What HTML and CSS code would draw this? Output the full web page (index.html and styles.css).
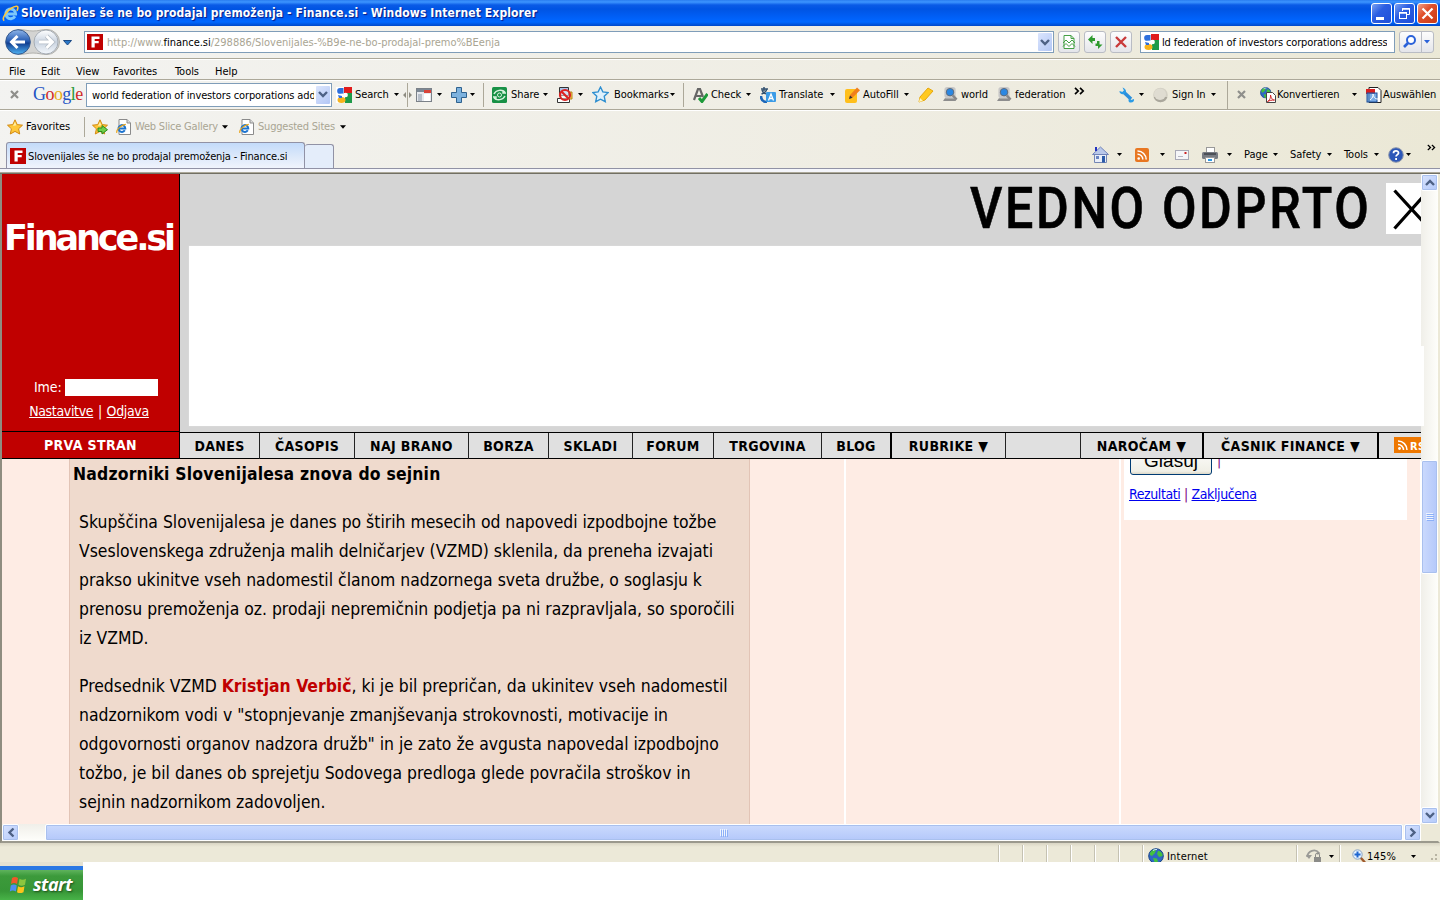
FILE: index.html
```
<!DOCTYPE html>
<html lang="sl">

<head>
  <meta charset="UTF-8">
  <title>Slovenijales še ne bo prodajal premoženja - Finance.si</title>
  <link rel="stylesheet" href="styles.css">
</head>

<body>
  <svg class="defs" width="0" height="0">
    <defs>
      <linearGradient id="blueball" x1="0" y1="0" x2="0" y2="1">
        <stop offset="0" stop-color="#8fb6ea"/>
        <stop offset="0.45" stop-color="#2a5fb4"/>
        <stop offset="0.55" stop-color="#123f92"/>
        <stop offset="1" stop-color="#4fb4f4"/>
      </linearGradient>
      <linearGradient id="greyball" x1="0" y1="0" x2="0" y2="1">
        <stop offset="0" stop-color="#ffffff"/>
        <stop offset="0.5" stop-color="#c9d3e0"/>
        <stop offset="1" stop-color="#f4f8fc"/>
      </linearGradient>
    </defs>
    <symbol id="arr" viewBox="0 0 5 3"><path d="M0 0h5L2.5 3z" fill="#000"/></symbol>
    <symbol id="chev" viewBox="0 0 10 7"><path d="M1 1l4 4 4-4" fill="none" stroke="#4d6185" stroke-width="2.4"/></symbol>
    <symbol id="ie" viewBox="0 0 16 16">
      <path d="M12.200 10.600A4.600 4.600 0 1 1 12.800 8.500H4.500" fill="none" stroke="#7cc8fa" stroke-width="2.800"/>
      <path d="M2 14.800C-1 12 7 2 13.500 1.200c2.200-.2 1.500 2.600.5 4.200" fill="none" stroke="#ffc83c" stroke-width="1.500"/>
    </symbol>
    <symbol id="iepage" viewBox="0 0 16 16">
      <path d="M3 .5h8l3.500 3.500v11.500H3z" fill="#fff" stroke="#8b8b8b"/>
      <path d="M11 .5V4h3.500" fill="#ddd" stroke="#8b8b8b"/>
      <path d="M8.800 11.300A3.400 3.400 0 1 1 9.300 9.500H3.500" fill="none" stroke="#1d74cf" stroke-width="2"/>
      <path d="M.8 13.800C0 11 5 5.800 9.800 5.300" fill="none" stroke="#e8a317" stroke-width="1.200"/>
    </symbol>
    <symbol id="fin" viewBox="0 0 16 16">
      <rect width="16" height="16" fill="#c00000"/>
      <path d="M4.500 2.500h8v2.400H7.700v2.100h4v2.300h-4v4.200H4.500z" fill="#fff"/>
    </symbol>
    <symbol id="goog" viewBox="0 0 16 16">
      <rect x="8" y="0" width="8" height="6" fill="#e01b1b"/>
      <rect x="9" y="6" width="7" height="10" fill="#1f9a49"/>
      <path d="M0 0h8v3l-1 4 2 3-1 6H0z" fill="#fff"/>
      <path d="M4 1a2.700 2.700 0 1 0 .1 5.800l3.400-.3V1z" fill="#2d6fdc"/>
      <ellipse cx="5.500" cy="13" rx="4" ry="3" fill="#f6b31b"/>
      <circle cx="9.700" cy="8" r="2.200" fill="#fff"/>
      <path d="M2 8l4 1v2H3z" fill="#2d6fdc"/>
    </symbol>
    <symbol id="star" viewBox="0 0 16 16">
      <path d="M8 .8l2.200 4.800 5.300.6-3.900 3.600 1.100 5.200L8 12.400 3.300 15l1.100-5.200L.5 6.200l5.300-.6z" fill="#ffc83a" stroke="#d38a12"/>
      <path d="M8 2.800l1.300 3.500L6 7z" fill="#fff0a8"/>
    </symbol>
    <symbol id="person" viewBox="0 0 16 16">
      <path d="M0 15h14l-2-3H2z" fill="#8d8d8d"/>
      <rect x="1.500" y="0" width="12" height="12" rx="3" fill="#c7c7c7"/>
      <circle cx="7.500" cy="5.500" r="4" fill="#2a87e2" stroke="#5f6a77"/>
      <path d="M10.500 9l4 4.500" stroke="#888" stroke-width="2.600"/>
    </symbol>
    <symbol id="xx" viewBox="0 0 9 9"><path d="M1 1l7 7M8 1L1 8" stroke="#8f8f8b" stroke-width="2.200"/></symbol>
    <symbol id="more" viewBox="0 0 11 8"><path d="M1 .8L4.200 4 1 7.200M6 .8L9.200 4 6 7.200" fill="none" stroke="#000" stroke-width="1.700"/></symbol>
    <symbol id="globe" viewBox="0 0 16 16">
      <circle cx="8" cy="8" r="7.300" fill="#2f68c4" stroke="#1b4588"/>
      <path d="M2 5c2-4 5-4 6-3L7 5l-3 3-2-1zM10 3c3 0 5 3 4.500 5L11 9 9 6zM5 10l4 .5 1 3-3 2z" fill="#44c13e"/>
      <path d="M5 2.500a6 6 0 0 1 4-1" stroke="#cfe6ff" fill="none"/>
    </symbol>
  </svg>

  <div class="titlebar">
    <svg width="17" height="17"><use href="#ie"/></svg>
    <span class="caption">Slovenijales še ne bo prodajal premoženja - Finance.si - Windows Internet Explorer</span>
    <div class="winbtn">
      <svg width="21" height="21"><rect x="4" y="13" width="8" height="3" fill="#fff"/></svg>
    </div>
    <div class="winbtn">
      <svg width="19" height="19" fill="none" stroke="#fff"><path d="M7.500 7V4.500h7v6H12" /><path d="M7 5h8" stroke-width="1.500"/><rect x="4.500" y="8.500" width="7" height="6"/><path d="M4 9h8" stroke-width="1.500"/></svg>
    </div>
    <div class="winbtn close">
      <svg width="19" height="19"><path d="M4.500 4.500l10 10M14.500 4.500l-10 10" stroke="#fff" stroke-width="2.200"/></svg>
    </div>
  </div>

  <div class="chrome">
    <div class="bar address">
      <svg class="travel" width="80" height="28">
        <path d="M14 1.500C20 1.500 24 3 29 3s9-1.500 14-1.500a12.500 12.500 0 0 1 0 25c-5 0-9-1.500-14-1.500s-9 1.500-15 1.500z" fill="#d4d4d2" stroke="#b1b1ad"/>
        <circle cx="14" cy="14" r="12.300" fill="url(#blueball)" stroke="#35588c"/>
        <path d="M8 14h13M13.500 8L7.500 14l6 6" fill="none" stroke="#fff" stroke-width="3"/>
        <circle cx="42" cy="14" r="12" fill="url(#greyball)" stroke="#a6adb5"/>
        <path d="M35 14h12M42.500 8l6 6-6 6" fill="none" stroke="#b4bcc6" stroke-width="4.500"/>
        <path d="M35 14h12M42.500 8l6 6-6 6" fill="none" stroke="#fff" stroke-width="2.800"/>
        <path d="M59.500 12.500h8L63.500 17z" fill="#2a78c8" stroke="#1c4a86"/>
      </svg>
      <div class="field url">
        <svg width="16" height="16"><use href="#fin"/></svg>
        <span class="t url-text">http://www.<b>finance.si</b>/298886/Slovenijales-%B9e-ne-bo-prodajal-premo%BEenja</span>
        <span class="drop"><svg width="10" height="7"><use href="#chev"/></svg></span>
      </div>
      <div class="sq"><svg width="16" height="16"><path d="M3 1.500h7l3 3v10H3z" fill="#fff" stroke="#45a045"/><path d="M10 1.500v3h3" fill="none" stroke="#45a045"/><path d="M2 9l3-3 3 3 3-3 3 3M2 12.500l3-3 3 3 3-3 3 3" fill="none" stroke="#45a045"/></svg></div>
      <div class="sq"><svg width="16" height="16"><path d="M1 5.500L5.500 1v3H8v3H5.500v3zM15.500 10.500L11 15v-3H8.500V9.500H10V7h2.500v3.500z" fill="#2f9b2f"/></svg></div>
      <div class="sq"><svg width="16" height="16"><path d="M3 3l10 10M13 3L3 13" stroke="#c93a3a" stroke-width="2.400"/></svg></div>
      <div class="field find">
        <svg width="16" height="16"><use href="#goog"/></svg>
        <span class="t find-text">ld federation of investors corporations address</span>
      </div>
      <div class="go">
        <svg width="34" height="20"><circle cx="11" cy="8" r="4" fill="#fff" stroke="#2b62d9" stroke-width="2"/><path d="M8 11l-4 4" stroke="#2b62d9" stroke-width="2.600"/><path d="M21.500 0v20" stroke="#b9bcc4"/><path d="M24 8h6l-3 3.500z" fill="#2b62d9"/></svg>
      </div>
    </div>

    <div class="bar menu">
      <span>File</span><span>Edit</span><span>View</span><span>Favorites</span><span>Tools</span><span>Help</span>
    </div>

    <div class="bar google">
      <svg width="9" height="9"><use href="#xx"/></svg>
      <span class="glogo"><i class="b">G</i><i class="r">o</i><i class="y">o</i><i class="b">g</i><i class="g">l</i><i class="r">e</i></span>
      <div class="field gq"><span class="t gq-text">world federation of investors corporations address</span><span class="drop"><svg width="10" height="7"><use href="#chev"/></svg></span></div>
      <svg width="16" height="16"><use href="#goog"/></svg>
      <span>Search</span>
      <svg width="5" height="3"><use href="#arr"/></svg>
      <svg width="9" height="24"><path d="M4.500 0v24" stroke="#aca899"/><path d="M3 9v6L0 12zM6 9v6l3-3z" fill="#8d8b80"/></svg>
      <svg width="16" height="16"><rect x=".5" y="1.500" width="15" height="13" fill="#e6e9ee" stroke="#7b8188"/><rect x="1" y="2" width="14" height="3" fill="#7b8794"/><rect x="8" y="3" width="7" height="3" fill="#d8433a"/><rect x="2" y="7" width="4" height="7" fill="#b7bfca"/><rect x="8" y="7" width="6" height="7" fill="#fff"/></svg>
      <svg width="5" height="3"><use href="#arr"/></svg>
      <svg width="16" height="16"><path d="M5.500.5h5v5h5v5h-5v5h-5v-5h-5v-5h5z" fill="#7db2de" stroke="#2f628f"/></svg>
      <svg width="5" height="3"><use href="#arr"/></svg>
      <i class="sep"></i>
      <svg width="16" height="16"><rect width="15" height="16" rx="1.500" fill="#189146"/><path d="M2 7c2-4 8-5 11-2M13 9c-2 4-8 5-11 2M11 3v3h3M4 13v-3H1" fill="none" stroke="#d7f2de" stroke-width="1.400"/><circle cx="7.500" cy="8" r="2" fill="none" stroke="#d7f2de"/></svg>
      <span>Share</span>
      <svg width="5" height="3"><use href="#arr"/></svg>
      <svg width="16" height="16"><path d="M2.500.5h9v8h-9z" fill="#a9c3ea" stroke="#333"/><path d="M.5 11.500h12v4H.5z" fill="#fff" stroke="#333"/><path d="M12 5h3v7h-3" fill="#f3c64d" stroke="#b58a1e"/><circle cx="8" cy="8" r="5" fill="#fff" fill-opacity=".5" stroke="#dc2323" stroke-width="2.200"/><path d="M4.500 4.500l7 7" stroke="#dc2323" stroke-width="2.200"/></svg>
      <svg width="5" height="3"><use href="#arr"/></svg>
      <svg width="17" height="17" viewBox="0 0 16 16"><path d="M8 1l2.200 4.500 5 .7-3.700 3.500 1 5.100L8 12.400l-4.500 2.400 1-5.100L.8 6.200l5-.7z" fill="#dff1fc" stroke="#2f8fd0" stroke-width="1.300"/></svg>
      <span>Bookmarks</span>
      <svg width="5" height="3"><use href="#arr"/></svg>
      <i class="sep"></i>
      <svg width="16" height="16"><path d="M2 13L6 2h2l3 8M3.500 9h6" fill="none" stroke="#666" stroke-width="2.200"/><path d="M7 11l3 3.500L15.500 7" fill="none" stroke="#1d9a3a" stroke-width="3"/></svg>
      <span>Check</span>
      <svg width="5" height="3"><use href="#arr"/></svg>
      <svg width="16" height="16"><path d="M1 2h7M4 0v4M1.500 7c3-1 5-3 5-5M2 3c1 3 3 4 5 4" fill="none" stroke="#33516f" stroke-width="1.500"/><path d="M1 9c0 4 2 6 6 6" stroke="#1d66b8" stroke-width="2.500" fill="none"/><rect x="6" y="5" width="10" height="10" rx="1" fill="#3b9be6"/><path d="M8.500 13.500L11 7l2.500 6.500M9.500 11.500h3" fill="none" stroke="#fff" stroke-width="1.300"/></svg>
      <span>Translate</span>
      <svg width="5" height="3"><use href="#arr"/></svg>
      <svg width="16" height="16"><rect y="2" width="12" height="14" rx="2" fill="#ffbf1c"/><path d="M4 12l1-4 7-7.500 3 2.700-7.500 7.500z" fill="#f07f1c"/><path d="M4 12l1-3.500 2.500 2.300z" fill="#333"/></svg>
      <span>AutoFill</span>
      <svg width="5" height="3"><use href="#arr"/></svg>
      <svg width="16" height="16"><path d="M1 15l1-5 8-9 5 3-8 9z" fill="#ffc91f" stroke="#e6a70c"/><path d="M1 15l1-4 3 3z" fill="#fff3bb"/></svg>
      <svg width="15" height="15"><use href="#person"/></svg>
      <span>world</span>
      <svg width="15" height="15"><use href="#person"/></svg>
      <span>federation</span>
      <svg class="up" width="11" height="8"><use href="#more"/></svg>
      <svg width="16" height="16"><path d="M4 4.500l8 7.500" stroke="#2b8fdc" stroke-width="3.600"/><path d="M3.500.5L5 3.500 3.500 5 .5 4C0 7 4 8 6 6.500S7 1.500 3.500.5zM15 12c.5 2-1 4-4 3.500C9 15 9 12 11 11l1 2z" fill="#2b9be6"/></svg>
      <svg width="5" height="3"><use href="#arr"/></svg>
      <svg width="16" height="16"><circle cx="7.500" cy="8" r="7.300" fill="#d3d0c4"/><path d="M.8 10a7 7 0 0 0 13.500 0z" fill="#aaa79c"/><ellipse cx="7" cy="7.200" rx="6" ry="5.800" fill="#dfdcd1"/></svg>
      <span>Sign In</span>
      <svg width="5" height="3"><use href="#arr"/></svg>
      <i class="sep tall"></i>
      <svg width="9" height="9"><use href="#xx"/></svg>
      <svg width="16" height="16"><g transform="scale(.72)"><use href="#globe" width="16" height="16"/></g><path d="M6.500 5.500h6l3 3v7h-9z" fill="#fff" stroke="#444"/><path d="M7.500 14.500c3-2 3-4 3-6.500 1 4 2 5 4 5-3 0-5 .5-7 1.500z" fill="none" stroke="#d11f1f"/></svg>
      <span>Konvertieren</span>
      <svg width="5" height="3"><use href="#arr"/></svg>
      <svg width="16" height="16"><path d="M3 .5h9l3 3v12H3z" fill="#fff" stroke="#222"/><rect y="2" width="9" height="5" fill="#d81e1e"/><rect x="1" y="6" width="10" height="9" fill="#4e8fdc" fill-opacity=".75" stroke="#1d4f9a"/><path d="M4 13c3-2 3-4 3-6 1 4 2 5 5 5" fill="none" stroke="#fff"/></svg>
      <span>Auswählen</span>
    </div>

    <div class="bar favs">
      <svg width="16" height="16"><use href="#star"/></svg>
      <span>Favorites</span>
      <i class="sep"></i>
      <svg width="16" height="16"><use href="#star"/><path d="M6 9h4V6.500l5.500 4.200L10 15v-2.500H6z" fill="#6fd04a" stroke="#2c8a1c"/></svg>
      <svg width="16" height="16"><use href="#iepage"/></svg>
      <span class="dim">Web Slice Gallery</span>
      <svg width="6" height="4"><use href="#arr"/></svg>
      <svg width="16" height="16"><use href="#iepage"/></svg>
      <span class="dim">Suggested Sites</span>
      <svg width="6" height="4"><use href="#arr"/></svg>
    </div>

    <div class="tabs">
      <div class="tab">
        <svg width="16" height="16"><use href="#fin"/></svg>
        <span class="t tab-text">Slovenijales še ne bo prodajal premoženja - Finance.si</span>
      </div>
      <div class="newtab"></div>
      <div class="cmds">
        <svg width="17" height="17"><path d="M2.500 8h12v8.500h-12z" fill="#e9eef8" stroke="#7486b4"/><path d="M.5 8.500L8.500 1l8 7.500z" fill="#b9c8ea" stroke="#7284b8"/><path d="M3 1h2v4H3z" fill="#2231c0"/><path d="M4 10h3v3H4z" fill="#6a85c2"/><path d="M10 10h3v6.500h-3z" fill="#2c5ba8"/></svg>
        <svg width="5" height="3"><use href="#arr"/></svg>
        <svg width="14" height="14"><rect width="14" height="14" rx="2" fill="#e87722"/><circle cx="3.700" cy="10.500" r="1.300" fill="#fff"/><path d="M2.500 6.300a5 5 0 0 1 5.300 5.200M2.500 3a8.500 8.500 0 0 1 8.700 8.500" fill="none" stroke="#fff" stroke-width="1.500"/></svg>
        <svg width="5" height="3"><use href="#arr"/></svg>
        <svg width="14" height="10"><rect x=".5" y=".5" width="13" height="9" fill="#f5f5f8" stroke="#a9a9b6"/><rect x="9.500" y="2" width="2" height="2" fill="#cc2222"/><path d="M3 6.500h5" stroke="#b6b6c2"/></svg>
        <svg width="16" height="16"><rect x="4.500" y=".5" width="8" height="5" fill="#fff" stroke="#999"/><rect y="5" width="16" height="7" rx="1.500" fill="#777b82"/><rect x="2" y="6" width="12" height="2" fill="#4c5057"/><rect x="3.500" y="10.500" width="9" height="5" fill="#fff" stroke="#999"/><path d="M6 13h4" stroke="#2f9be6" stroke-width="2"/></svg>
        <svg width="5" height="3"><use href="#arr"/></svg>
        <span>Page</span>
        <svg width="5" height="3"><use href="#arr"/></svg>
        <span>Safety</span>
        <svg width="5" height="3"><use href="#arr"/></svg>
        <span>Tools</span>
        <svg width="5" height="3"><use href="#arr"/></svg>
        <svg width="16" height="16"><circle cx="8" cy="8" r="7.300" fill="#2c57b8" stroke="#8f98ab"/><path d="M5.500 6.200c0-3.200 5-3 5-.3 0 1.800-2.400 1.700-2.400 3.700M8.100 11v2" fill="none" stroke="#fff" stroke-width="1.800"/></svg>
        <svg width="5" height="3"><use href="#arr"/></svg>
        <svg class="up" width="9" height="7" viewBox="0 0 11 8"><use href="#more"/></svg>
      </div>
    </div>
  </div>

  <div class="viewport">
    <div class="page">
      <div class="head">
        <div class="brand">
          <div class="logo">Finance.si</div>
          <div class="login">Ime: <span class="name"></span></div>
          <div class="links"><u>Nastavitve</u> | <u>Odjava</u></div>
          <div class="first">PRVA STRAN</div>
        </div>
        <div class="right">
          <div class="banner">
            <div class="slogan"><span class="vedno">VEDNO ODPRTO</span>
              <div class="xbox"><svg width="40" height="51"><path d="M8.500 7.500l35 38M8.500 45.500l34-38" stroke="#000" stroke-width="3.200"/></svg></div>
            </div>
            <div class="ad"></div>
          </div>
          <div class="nav">
            <span>DANES</span><span>ČASOPIS</span><span>NAJ BRANO</span><span>BORZA</span><span>SKLADI</span><span>FORUM</span><span>TRGOVINA</span><span class="thick">BLOG</span><span>RUBRIKE ▼</span><span></span><span class="thick">NAROČAM ▼</span><span class="thick">ČASNIK FINANCE ▼</span><span class="rss"><svg width="28" height="16"><rect width="28" height="16" fill="#ee7700"/><circle cx="5.500" cy="11.500" r="1.400" fill="#fff"/><path d="M4 7.500a5.500 5.500 0 0 1 5.500 5.500M4 4a9 9 0 0 1 9 9" fill="none" stroke="#fff" stroke-width="1.500"/><text x="16" y="12.500" class="rsst">RSS</text></svg></span>
          </div>
        </div>
      </div>
      <div class="body">
        <div class="article">
          <h2>Nadzorniki Slovenijalesa znova do sejnin</h2>
          <p>Skupščina Slovenijalesa je danes po štirih mesecih od napovedi izpodbojne tožbe<br>
            Vseslovenskega združenja malih delničarjev (VZMD) sklenila, da preneha izvajati<br>
            prakso ukinitve vseh nadomestil članom nadzornega sveta družbe, o soglasju k<br>
            prenosu premoženja oz. prodaji nepremičnin podjetja pa ni razpravljala, so sporočili<br>
            iz VZMD.</p>
          <p>Predsednik VZMD <b>Kristjan Verbič</b>, ki je bil prepričan, da ukinitev vseh nadomestil<br>
            nadzornikom vodi v "stopnjevanje zmanjševanja strokovnosti, motivacije in<br>
            odgovornosti organov nadzora družb" in je zato že avgusta napovedal izpodbojno<br>
            tožbo, je bil danes ob sprejetju Sodovega predloga glede povračila stroškov in<br>
            sejnin nadzornikom zadovoljen.</p>
        </div>
        <div class="gap1"></div>
        <div class="gap2"></div>
        <div class="side">
          <div class="poll">
            <div class="vote"><span class="btn">Glasuj</span> <span class="bar-ch">|</span></div>
            <div class="res"><u>Rezultati</u> | <u>Zaključena</u></div>
          </div>
        </div>
      </div>
    </div>
    <div class="vscroll">
      <div class="sb"><svg width="10" height="7" class="flip"><use href="#chev"/></svg></div>
      <div class="vthumb"><svg width="8" height="8"><path d="M0 .5h7M0 2.500h7M0 4.500h7M0 6.500h7" stroke="#eef4fe"/><path d="M1 1.500h7M1 3.500h7M1 5.500h7M1 7.500h7" stroke="#8cb0f8"/></svg></div>
      <div class="sb"><svg width="10" height="7"><use href="#chev"/></svg></div>
    </div>
    <div class="spill"></div>
    <div class="hscroll">
      <div class="sb"><svg width="10" height="7" class="toleft"><use href="#chev"/></svg></div>
      <div class="hthumb"><svg width="8" height="8"><path d="M.5 0v7M2.500 0v7M4.500 0v7M6.500 0v7" stroke="#eef4fe"/><path d="M1.500 1v7M3.500 1v7M5.500 1v7M7.500 1v7" stroke="#8cb0f8"/></svg></div>
      <div class="sb"><svg width="10" height="7" class="toright"><use href="#chev"/></svg></div>
    </div>
  </div>

  <div class="status">
    <i></i><i></i><i></i><i></i><i></i><i></i><i></i>
    <svg width="16" height="16"><use href="#globe"/></svg>
    <span>Internet</span>
    <i></i>
    <svg width="16" height="16"><path d="M1 9c1-6 8-9 12-4l-2 1" fill="none" stroke="#9a9a96" stroke-width="1.800"/><path d="M0 7l3 4 3-4z" fill="#9a9a96"/><rect x="8" y="9" width="7" height="6" fill="#8b8b88"/><path d="M9.500 9V7a2 2 0 0 1 4 0v2" fill="none" stroke="#8b8b88"/></svg>
    <svg width="5" height="3"><use href="#arr"/></svg>
    <i></i>
    <svg width="14" height="14"><path d="M8.500 8.500l4.500 5" stroke="#a05a2c" stroke-width="2.400"/><circle cx="5.500" cy="5.500" r="4.700" fill="#e3f1ff" stroke="#8aa4c4"/><path d="M5.500 2.500v6M2.500 5.500h6" stroke="#1f66d0" stroke-width="2"/></svg>
    <span>145%</span>
    <svg width="5" height="3"><use href="#arr"/></svg>
    <svg width="8" height="12"><path d="M5 4h2v2H5zM5 8h2v2H5zM1 8h2v2H1z" fill="#b8b4a3"/></svg>
  </div>

  <div class="taskbar">
    <div class="start">
      <svg width="20" height="18"><path d="M3 2c2-1.500 4-1.500 6 0L8 8c-2-1.500-4-1.500-6 0z" fill="#f0582a"/><path d="M10.500 2.800c2 1.200 4 1.200 6.500 0l-1 6c-2.500 1.200-4.500 1.200-6.500 0z" fill="#8cc63f"/><path d="M1.800 9.500c2-1.500 4-1.500 6 0l-1 6c-2-1.500-4-1.500-6 0z" fill="#4f8ef0"/><path d="M9 10.200c2 1.300 4 1.300 6.500 0l-1 6c-2.500 1.200-4.500 1.200-6.500 0z" fill="#fcc41c"/></svg>
      <span>start</span>
    </div>
  </div>
</body>

</html>
```
FILE: styles.css
```
* {
  box-sizing: border-box;
}

body {
  margin: 0;
  width: 1440px;
  height: 900px;
  overflow: hidden;
  background-color: white;
  color: black;
  font-family: "DejaVu Sans Condensed", "DejaVu Sans", "Noto Sans", sans-serif;
  font-stretch: condensed;
  font-size: 11px;
  letter-spacing: -0.05px;
  white-space: nowrap;
}

svg {
  display: block;
  flex: none;
}

.defs {
  position: absolute;
}

i {
  font-style: normal;
}

/* title bar */
.titlebar {
  height: 26px;
  display: flex;
  align-items: center;
  gap: 2px;
  padding: 0 2px;
  background: linear-gradient(#2a7df0 0, #3d95ff 2px, #0a5be6 5px, #0054e3 9px, #0062fb 19px, #0068ff 22px, #0048c8 26px);
}

.caption {
  flex: 1;
  color: white;
  font-size: 12px;
  font-weight: bold;
  letter-spacing: 0.12px;
  text-shadow: 1px 1px 1px #0a1883;
}

.winbtn {
  width: 21px;
  height: 21px;
  border: 1px solid white;
  border-radius: 3px;
  background: linear-gradient(135deg, #7ba2f2, #2b5ee2 40%, #1f4fd8);
}

.winbtn.close {
  background: linear-gradient(135deg, #f0a088, #e0502c 40%, #c93a14);
}

/* toolbars */
.chrome {
  height: 148px;
  display: flex;
  flex-direction: column;
  border-bottom: 1px solid #716f64;
  background: linear-gradient(100deg, #f3f3f1, #efede3 60%, #ebe8d6);
}

.bar {
  border-bottom: 1px solid #aca899;
  box-shadow: 0 1px 0 white;
}

.field {
  display: flex;
  align-items: center;
  height: 22px;
  border: 1px solid #7f9db9;
  background-color: white;
  padding: 0 1px 0 2px;
}

.t {
  overflow: hidden;
  padding-top: 1px;
}

.drop {
  width: 14px;
  height: 18px;
  margin-left: auto;
  display: flex;
  align-items: center;
  justify-content: center;
  flex: none;
  border-radius: 1px;
  background: linear-gradient(135deg, #dbe5fd, #b3c7f5);
}

.address {
  display: flex;
  align-items: center;
  height: 33px;
  padding-left: 4px;
}

.url {
  width: 970px;
  margin-right: 4px;
}

.url-text {
  margin-left: 4px;
  color: #a9a593;
  letter-spacing: -0.02px;
}

.url-text b {
  font-weight: normal;
  color: black;
}

.sq,
.go {
  width: 22px;
  height: 22px;
  margin-right: 4px;
  border: 1px solid #b9bcc4;
  border-radius: 3px;
  background: linear-gradient(#fdfdfd, #e4e5ea);
  display: flex;
  align-items: center;
  justify-content: center;
}

.find {
  width: 255px;
  margin: 0 4px;
}

.find-text {
  margin-left: 3px;
  letter-spacing: -0.13px;
}

.go {
  width: 35px;
  margin: 0;
}

.menu {
  height: 21px;
  display: grid;
  grid-template-columns: 32px 35px 37px 62px 40px 60px;
  align-items: center;
  padding: 4px 0 0 9px;
}

.google {
  height: 30px;
  display: grid;
  align-items: center;
  padding-left: 10px;
  grid-template-columns:
    23px 53px 250px 19px 39px 9px 13px 21px 14px 19px 13px 9px
    19px 32px 14px 21px 14px 22px 56px 13px 9px
    19px 35px 14px 19px 51px 15px 18px 41px 14px 25px
    18px 36px 18px 59px 45px 20px 14px 19px 39px 16px 10px
    23px 17px 75px 14px 17px 57px;
}

.sep {
  width: 1px;
  height: 24px;
  background-color: #aca899;
}

.sep.tall {
  height: 28px;
}

.up {
  margin-bottom: 7px;
}

.cmds .up {
  margin-bottom: 15px;
}

.glogo {
  font-family: "Liberation Serif", serif;
  font-size: 18px;
  letter-spacing: -0.55px;
}

.glogo .b {
  color: #2353c4;
}

.glogo .r {
  color: #cf2a2a;
}

.glogo .y {
  color: #e8ac16;
}

.glogo .g {
  color: #2a9a3c;
}

.gq {
  width: 246px;
  height: 24px;
  padding-left: 5px;
}

.gq-text {
  width: 222px;
  letter-spacing: -0.13px;
}

.favs {
  height: 31px;
  display: grid;
  align-items: center;
  padding: 2px 0 0 7px;
  grid-template-columns: 19px 58px 8px 24px 19px 87px 17px 19px 82px 10px;
  border-bottom: 0;
  box-shadow: none;
}

.favs .sep {
  height: 20px;
}

.dim {
  color: #a9a593;
  letter-spacing: -0.2px;
}

.tabs {
  display: flex;
  align-items: flex-end;
  height: 28px;
  flex: none;
  padding-left: 6px;
  border-bottom: 1px solid #9192a5;
  box-shadow: 0 3px 0 #f5f6fb, 0 4px 0 #aca899;
}

.tab {
  width: 299px;
  height: 26px;
  display: flex;
  align-items: center;
  gap: 2px;
  padding-left: 3px;
  border: 1px solid #9192a5;
  border-bottom: 0;
  border-radius: 3px 3px 0 0;
  background: linear-gradient(#c3dbfa, #dfeafa 60%, #f0f4fc);
}

.tab-text {
  letter-spacing: -0.15px;
}

.newtab {
  width: 29px;
  height: 24px;
  border: 1px solid #9192a5;
  border-left: 0;
  border-bottom: 0;
  border-radius: 3px 3px 0 0;
  background-color: #e4edfa;
}

.cmds {
  height: 27px;
  margin-left: 758px;
  display: grid;
  align-items: center;
  grid-template-columns: 25px 18px 25px 15px 27px 25px 17px 29px 17px 37px 17px 30px 14px 18px 21px 11px;
}

/* page area */
.viewport {
  position: relative;
  height: 669px;
  display: grid;
  grid-template-columns: 1419px 17px;
  grid-template-rows: 650px 17px;
  border-left: 2px solid #8f8d80;
  border-right: 2px solid #ece9d8;
  border-bottom: 2px solid #9b998d;
  background-color: #ece9d8;
}

.page {
  overflow: hidden;
  background-color: #feece4;
}

.head {
  display: flex;
  height: 285px;
  border-bottom: 1px solid black;
}

.brand {
  width: 178px;
  flex: none;
  display: flex;
  flex-direction: column;
  border-right: 1px solid black;
  background-color: #c00000;
  color: white;
  text-align: center;
  font-size: 14px;
  letter-spacing: -0.4px;
}

.logo {
  height: 128px;
  padding: 41px 0 0 2px;
  font-family: "DejaVu Sans", sans-serif;
  font-stretch: normal;
  font-weight: bold;
  font-size: 35px;
  line-height: 46px;
  letter-spacing: -3.1px;
  text-align: left;
}

.login {
  height: 24px;
  margin-top: 73px;
  padding: 3px 0 0 32px;
  display: flex;
  gap: 3px;
  line-height: 18px;
  letter-spacing: -0.1px;
}

.name {
  width: 93px;
  height: 17px;
  margin-top: 1px;
  background-color: white;
}

.links {
  height: 32px;
  padding-right: 3px;
  line-height: 24px;
  word-spacing: 1px;
  letter-spacing: -0.33px;
}

.first {
  height: 27px;
  border-top: 1px solid black;
  font-weight: bold;
  line-height: 27px;
  letter-spacing: 0.35px;
}

.right {
  flex: 1;
  min-width: 0;
}

.banner {
  height: 258px;
  padding: 0 0 0 9px;
  background-color: #d5d5d5;
}

.slogan {
  height: 72px;
  padding-top: 9px;
  display: flex;
  justify-content: flex-end;
}

.vedno {
  width: 416px;
  font-family: Roboto, sans-serif;
  font-stretch: normal;
  font-weight: 500;
  font-size: 57px;
  line-height: 52px;
  letter-spacing: 3px;
  transform: scaleX(0.88);
  transform-origin: left;
  -webkit-text-stroke: 0.6px black;
}

.xbox {
  width: 35px;
  height: 51px;
  overflow: hidden;
  background-color: white;
}

.ad {
  height: 180px;
  background-color: white;
  box-shadow: 0 0 1px #e6e6e6;
}

.nav {
  height: 26px;
  display: grid;
  grid-template-columns: 80px 95px 114px 80px 84px 81px 108px 70px 114px 75px 123px 175px 60px;
  border-top: 1px solid black;
  background-color: #e0e0e0;
  font-size: 14px;
  font-weight: bold;
  line-height: 26px;
  letter-spacing: 0.35px;
  text-align: center;
}

.nav span {
  border-right: 1px solid #222;
}

.nav .thick {
  border-right: 2px solid black;
}

.nav .rss {
  padding: 4px 0 0 15px;
}

.rsst {
  font-size: 11px;
  fill: white;
}

.body {
  display: flex;
  height: 365px;
}

.article {
  width: 681px;
  margin-left: 67px;
  padding: 1px 0 0 9px;
  border-left: 1px solid #e2c4b6;
  border-right: 1px solid #e2c4b6;
  background-color: #efdacd;
  font-size: 17.4px;
  line-height: 29px;
  letter-spacing: 0;
}

.article h2 {
  margin: 0 0 19px -6px;
  font-size: 17.4px;
  line-height: 29px;
  letter-spacing: 0.2px;
}

.article p {
  margin: 0 0 19px;
}

.article b {
  color: #c00000;
}

.gap1 {
  width: 96px;
  border-right: 2px solid white;
}

.gap2 {
  width: 275px;
  border-right: 2px solid white;
}

.side {
  flex: 1;
  padding-left: 3px;
  border-right: 1px solid white;
}

.poll {
  width: 283px;
  height: 61px;
  padding-left: 5px;
  overflow: hidden;
  background-color: white;
  color: #800080;
  font-size: 14px;
  letter-spacing: -0.4px;
}

.vote {
  display: flex;
  gap: 5px;
  margin: -14px 0 0 1px;
}

.btn {
  width: 82px;
  height: 30px;
  border: 1px solid #003c74;
  border-radius: 3px;
  background: linear-gradient(white, #f0efe6 90%, #dcd8c8);
  color: black;
  font-family: "Liberation Sans", Arial, sans-serif;
  font-size: 19px;
  line-height: 29px;
  letter-spacing: 0;
  text-align: center;
}

.bar-ch {
  line-height: 30px;
}

.res {
  margin-top: 8px;
  line-height: 22px;
}

.res u {
  color: #0000ee;
}

/* scrollbars */
.vscroll {
  display: flex;
  flex-direction: column;
  background: linear-gradient(to right, #f0efe9, #fefefb);
}

.sb,
.vthumb,
.hthumb {
  display: flex;
  align-items: center;
  justify-content: center;
  border: 1px solid white;
  border-radius: 2px;
  box-shadow: inset 0 0 0 1px #a9c0ee;
  background: linear-gradient(135deg, #d8e3fe, #b3c9fa);
}

.sb {
  width: 17px;
  height: 17px;
  flex: none;
}

.vthumb {
  height: 114px;
  margin: 269px 0 auto;
  background: linear-gradient(to right, #cbdafd, #b4c8fa);
}

.hscroll {
  display: flex;
  background: linear-gradient(#f0efe9, #fefefb);
}

.hthumb {
  width: 1358px;
  margin: 0 auto 0 26px;
  background: linear-gradient(#cbdafd, #b4c8fa);
}

.flip {
  transform: rotate(180deg);
}

.toleft {
  transform: rotate(90deg);
}

.toright {
  transform: rotate(-90deg);
}

/* the ad sticks out over the scrollbar */
.spill {
  position: absolute;
  left: 1419px;
  top: 172px;
  width: 3px;
  height: 80px;
  background-color: white;
}

/* status bar */
.status {
  height: 19px;
  padding-left: 998px;
  overflow: hidden;
  display: grid;
  align-items: center;
  grid-template-columns: 24px 24px 24px 24px 24px 24px 6px 19px 129px 10px 23px 10px 13px 15px 44px 19px 9px;
  grid-template-rows: 26px;
  letter-spacing: 0.2px;
  background: linear-gradient(#d9d5c4, #ece9d8 4px);
}

.status i {
  width: 2px;
  height: 22px;
  border-left: 1px solid #c5c2b2;
  border-right: 1px solid white;
}

.taskbar {
  width: 83px;
  height: 38px;
  padding-top: 4px;
  background-color: #e5e2d2;
}

.start {
  height: 34px;
  display: flex;
  align-items: center;
  gap: 4px;
  padding-left: 9px;
  border-top: 4px solid #2b78e4;
  background: linear-gradient(#5fb35c, #3c9a3b 20%, #379637 70%, #48b348);
}

.start span {
  color: white;
  font-family: "Open Sans", sans-serif;
  font-stretch: normal;
  font-size: 18px;
  font-style: italic;
  font-weight: bold;
  line-height: 26px;
  margin-bottom: 2px;
  letter-spacing: -0.5px;
  text-shadow: 1px 1px 2px #1c4f1c;
}
```
